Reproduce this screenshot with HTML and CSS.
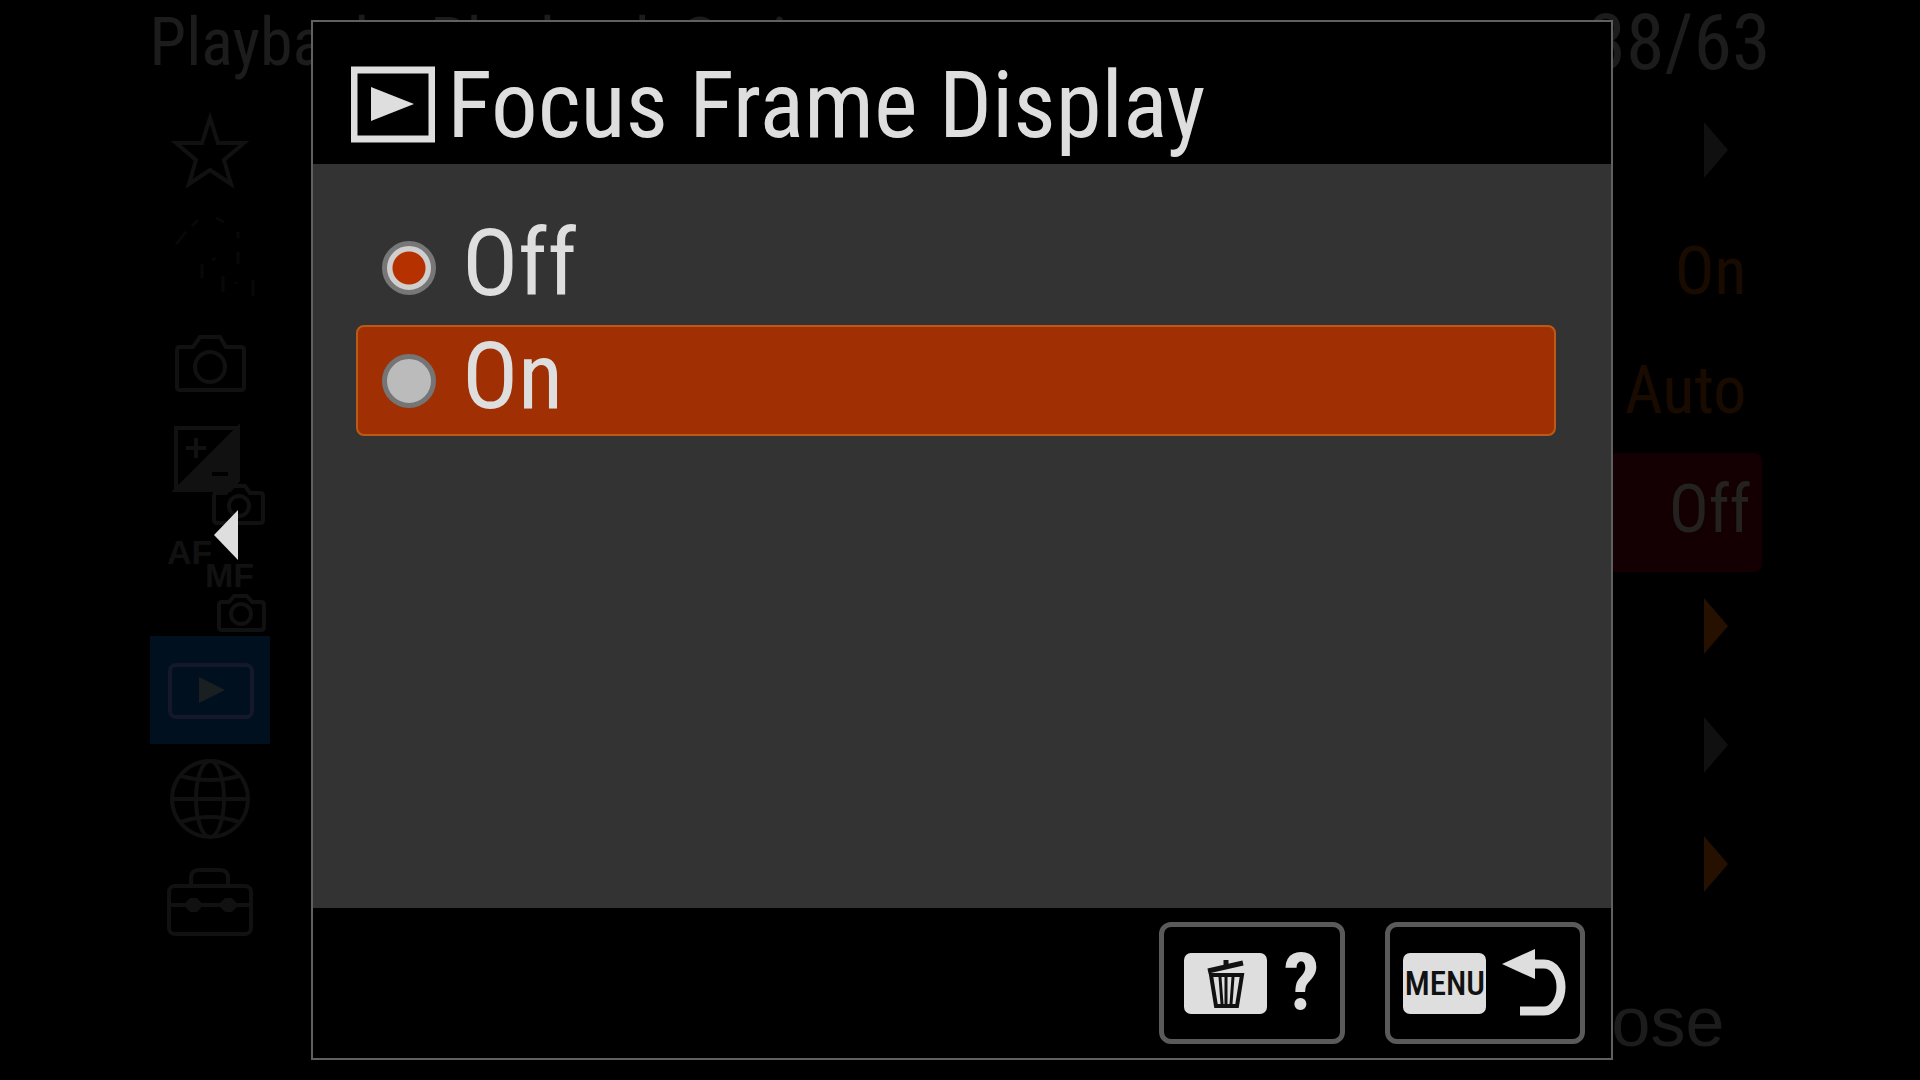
FILE: index.html
```html
<!DOCTYPE html>
<html lang="en">
<head>
    <meta charset="UTF-8">
    <meta name="viewport" content="width=device-width, initial-scale=1.0">
    <title>Focus Frame Display</title>

    <link rel="stylesheet" href="styles.css">
</head>

<body>

    <!-- Dimmed menu behind the dialog -->
    <div class="menu">
        <div class="menu-header">
            <span class="menu-title">Playback:&nbsp; Playback Option</span>
            <span class="menu-page">38/63</span>
        </div>

        <div class="menu-main">
            <nav class="tabs">
                <a href="#" class="tab" aria-label="My Menu">
                    <svg width="120" height="108" viewBox="0 0 120 108" class="line">
                        <path d="M60 22 L68 47 H94 L74 64 L81 88 L60 74 L39 88 L46 64 L26 47 H52 Z"/>
                    </svg>
                </a>
                <a href="#" class="tab" aria-label="Main">
                    <svg width="120" height="108" viewBox="0 0 120 108" class="line faint">
                        <path d="M26 40 L36 28 M42 22 L48 16 M66 14 L74 18 M88 28 V34 M88 48 V60 M62 56 L66 54 M52 60 V74 M73 72 V88 M86 78 V80 M103 76 V92"/>
                    </svg>
                </a>
                <a href="#" class="tab" aria-label="Shooting">
                    <svg width="120" height="108" viewBox="0 0 120 108" class="line">
                        <path d="M27 38 Q27 35 30 35 H43 L50 25 H70 L76 35 H91 Q94 35 94 38 V75 Q94 78 91 78 H30 Q27 78 27 75 Z"/>
                        <circle cx="60" cy="55" r="15"/>
                    </svg>
                </a>
                <a href="#" class="tab" aria-label="Exposure/Color">
                    <svg width="120" height="108" viewBox="0 0 120 108" class="line">
                        <path d="M26 8 H88 V60 L80 70 H26 Z"/>
                        <path class="solid" d="M88 8 V60 L80 70 H26 Z"/>
                        <path d="M36 28 H56 M46 18 V38"/>
                        <path class="cut" d="M62 54 H78"/>
                        <path d="M64 76 Q64 73 67 73 H76 L81 66 H95 L100 73 H110 Q113 73 113 76 V100 Q113 103 110 103 H67 Q64 103 64 100 Z"/>
                        <circle cx="89" cy="86" r="10"/>
                    </svg>
                </a>
                <a href="#" class="tab" aria-label="Focus">
                    <svg width="120" height="108" viewBox="0 0 120 108" class="line">
                        <text x="17" y="36">AF</text>
                        <text x="55" y="59">MF</text>
                        <path d="M69 77 Q69 74 72 74 H79 L84 68 H97 L102 74 H111 Q114 74 114 77 V99 Q114 102 111 102 H72 Q69 102 69 99 Z"/>
                        <circle cx="91" cy="86" r="10"/>
                    </svg>
                </a>
                <a href="#" class="tab tab-active" aria-label="Playback">
                    <svg width="120" height="108" viewBox="0 0 120 108" class="line">
                        <rect x="20" y="29" width="82" height="52" rx="6"/>
                        <path class="play" d="M49 41 L75 54 L49 67 Z"/>
                    </svg>
                </a>
                <a href="#" class="tab" aria-label="Network">
                    <svg width="120" height="108" viewBox="0 0 120 108" class="line">
                        <circle cx="60" cy="55" r="38"/>
                        <ellipse cx="60" cy="55" rx="14" ry="38"/>
                        <path d="M22 55 H98 M31 32 Q60 40 89 32 M31 78 Q60 68 89 78"/>
                    </svg>
                </a>
                <a href="#" class="tab" aria-label="Setup">
                    <svg width="120" height="108" viewBox="0 0 120 108" class="line">
                        <rect x="19" y="34" width="82" height="48" rx="6"/>
                        <path d="M41 34 V26 Q41 18 49 18 H70 Q78 18 78 26 V34 M19 53 H101"/>
                        <path class="solid" d="M36 53 L41 48 H46 L51 53 L46 58 H41 Z M71 53 L76 48 H81 L86 53 L81 58 H76 Z"/>
                    </svg>
                </a>
            </nav>

            <ul class="settings">
                <li><svg class="arrow" width="24" height="56" viewBox="0 0 24 56"><path d="M0 0 L24 28 L0 56 Z"/></svg></li>
                <li><span class="value">On</span></li>
                <li><span class="value">Auto</span></li>
                <li class="current"><span class="value">Off</span></li>
                <li><svg class="arrow orange" width="24" height="56" viewBox="0 0 24 56"><path d="M0 0 L24 28 L0 56 Z"/></svg></li>
                <li><svg class="arrow" width="24" height="56" viewBox="0 0 24 56"><path d="M0 0 L24 28 L0 56 Z"/></svg></li>
                <li><svg class="arrow orange" width="24" height="56" viewBox="0 0 24 56"><path d="M0 0 L24 28 L0 56 Z"/></svg></li>
            </ul>
        </div>

        <div class="menu-footer">Close</div>
    </div>

    <button class="back-arrow" type="button" aria-label="Back">
        <svg width="24" height="50" viewBox="0 0 24 50"><path d="M24 0 V50 L0 25 Z"/></svg>
    </button>

    <!-- Dialog -->
    <div class="dialog">
        <div class="dialog-header">
            <svg class="play-icon" width="84" height="77" viewBox="0 0 84 77">
                <rect x="3" y="4" width="78" height="69"/>
                <path d="M20 21 L63 38 L20 55 Z"/>
            </svg>
            <h1>Focus Frame Display</h1>
        </div>

        <form class="options">
            <label class="option">
                <input type="radio" name="focus-frame" value="off" checked>
                <span>Off</span>
            </label>
            <label class="option option-selected">
                <input type="radio" name="focus-frame" value="on">
                <span>On</span>
            </label>
        </form>

        <div class="dialog-footer">
            <button class="btn btn-help" type="button" aria-label="Help">
                <span class="key">
                    <svg width="40" height="52" viewBox="0 0 40 52">
                        <path d="M2 14 L37 6 M20 9 V3" stroke-width="5"/>
                        <path d="M5 18 H36 L31 49 H10 Z" stroke-width="4"/>
                        <path d="M14 20 L16 47 M20 20 V47 M27 20 L25 47" stroke-width="3"/>
                    </svg>
                </span>
                <span class="mark">?</span>
            </button>
            <button class="btn btn-menu" type="button">
                <span class="key">MENU</span>
                <svg width="64" height="68" viewBox="0 0 64 68">
                    <path class="head" d="M0 15 L33 0 V30 Z"/>
                    <path class="tail" d="M30 15 H42 C52 15 59 26 59 38 C59 50 52 62 42 62 H18"/>
                </svg>
            </button>
        </div>
    </div>

</body>

</html>
```

FILE: styles.css
```css
* {
    box-sizing: border-box;
}

body {
    font-family: 'Roboto Condensed', Roboto, sans-serif;
    margin: 0;
    background-color: #000;
    color: #dedede;
    position: relative;
}

/* Menu */

.menu {
    min-height: 100vh;
    padding: 0 8%;
    display: flex;
    flex-direction: column;
    color: #1c1c1c;
}

.menu-header {
    height: 96px;
    margin: 0 -4px;
    padding-bottom: 12px;
    display: flex;
    justify-content: space-between;
    align-items: center;
}

.menu-title {
    font-size: 66px;
}

.menu-page {
    font-size: 78px;
}

.menu-main {
    display: flex;
    margin: 0 4px 0 -4px;
}

.tab {
    display: block;
    height: 108px;
    color: #111;
}

.tab-active {
    background-color: #00101e;
    color: #14182a;
}

.tab svg {
    display: block;
}

.line {
    fill: none;
    stroke: currentColor;
    stroke-width: 4;
}

.line.faint {
    stroke: #080808;
    stroke-width: 3;
}

.line .solid {
    fill: currentColor;
}

.line .play {
    fill: #1a1f22;
    stroke: none;
}

.line .cut {
    stroke: #000;
}

.line text {
    font-family: 'Liberation Sans', sans-serif;
    font-size: 34px;
    font-weight: bold;
    fill: currentColor;
    stroke: none;
}

.settings {
    list-style: none;
    margin: 0 0 0 48px;
    padding: 0;
    flex-grow: 1;
}

.settings li {
    height: 119px;
    padding: 0 16px 12px 0;
    display: flex;
    justify-content: flex-end;
    align-items: center;
    font-size: 66px;
    color: #1a0b00;
}

.settings .current {
    background-color: #140002;
    border-radius: 8px;
    padding-right: 12px;
    color: #242220;
}

.value {
    padding-top: 6px;
}

.arrow {
    fill: #101010;
    margin-right: 18px;
}

.arrow.orange {
    fill: #261000;
}

.menu-footer {
    font-family: 'Liberation Sans', sans-serif;
    font-size: 70px;
    line-height: 80px;
    padding: 22px 42px 0 0;
    text-align: right;
}

.back-arrow {
    position: absolute;
    left: 214px;
    top: 510px;
    padding: 0;
    border: none;
    background: none;
    cursor: pointer;
}

.back-arrow svg {
    display: block;
    fill: #dedede;
}

/* Dialog */

.dialog {
    position: absolute;
    top: 20px;
    bottom: 20px;
    left: 16%;
    right: 16%;
    margin: 0 0 0 4px;
    border: 2px solid #606060;
    background-color: #000;
    display: flex;
    flex-direction: column;
}

.dialog-header {
    height: 142px;
    padding: 22px 38px 0;
    display: flex;
    align-items: center;
    gap: 12px;
}

.dialog-header h1 {
    margin: 0;
    padding-top: 2px;
    font-size: 93px;
    font-weight: normal;
    white-space: nowrap;
}

.play-icon rect {
    fill: none;
    stroke: #dedede;
    stroke-width: 7;
}

.play-icon path {
    fill: #dedede;
}

.options {
    flex-grow: 1;
    padding: 48px 55px 0 43px;
    background-color: #333;
}

.option {
    height: 111px;
    margin-bottom: 2px;
    padding-left: 24px;
    display: flex;
    align-items: center;
    gap: 26px;
    border: 2px solid transparent;
    border-radius: 8px;
    font-size: 93px;
    line-height: 96px;
    cursor: pointer;
}

.option-selected {
    background-color: #a03004;
    border-color: #bc5a14;
}

.option span {
    padding-bottom: 8px;
}

.option input {
    appearance: none;
    width: 54px;
    height: 54px;
    margin: 0;
    border: 5px solid #757575;
    border-radius: 50%;
    background-color: #bbb;
}

.option input:checked {
    border-color: #777;
    background: radial-gradient(circle, #b53200 16px, #cfcfcf 17px);
}

.dialog-footer {
    height: 150px;
    padding: 14px 26px 0;
    display: flex;
    justify-content: flex-end;
    align-items: flex-start;
    gap: 40px;
}

.btn {
    height: 122px;
    padding: 0 14px;
    display: flex;
    align-items: center;
    justify-content: center;
    gap: 16px;
    border: 5px solid #5a5a5a;
    border-radius: 12px;
    background-color: #000;
    color: #dedede;
    font-family: inherit;
    cursor: pointer;
}

.btn-help {
    width: 186px;
}

.btn-menu {
    width: 200px;
}

.btn svg {
    flex-shrink: 0;
}

.key {
    flex-shrink: 0;
    width: 83px;
    height: 61px;
    display: flex;
    align-items: center;
    justify-content: center;
    border-radius: 7px;
    background-color: #dedede;
    color: #111;
    font-size: 33px;
    font-weight: 500;
}

.key svg {
    fill: none;
    stroke: #111;
}

.mark {
    font-size: 80px;
    font-weight: bold;
}

.btn-menu .head {
    fill: #dedede;
}

.btn-menu .tail {
    fill: none;
    stroke: #dedede;
    stroke-width: 9;
}
```
